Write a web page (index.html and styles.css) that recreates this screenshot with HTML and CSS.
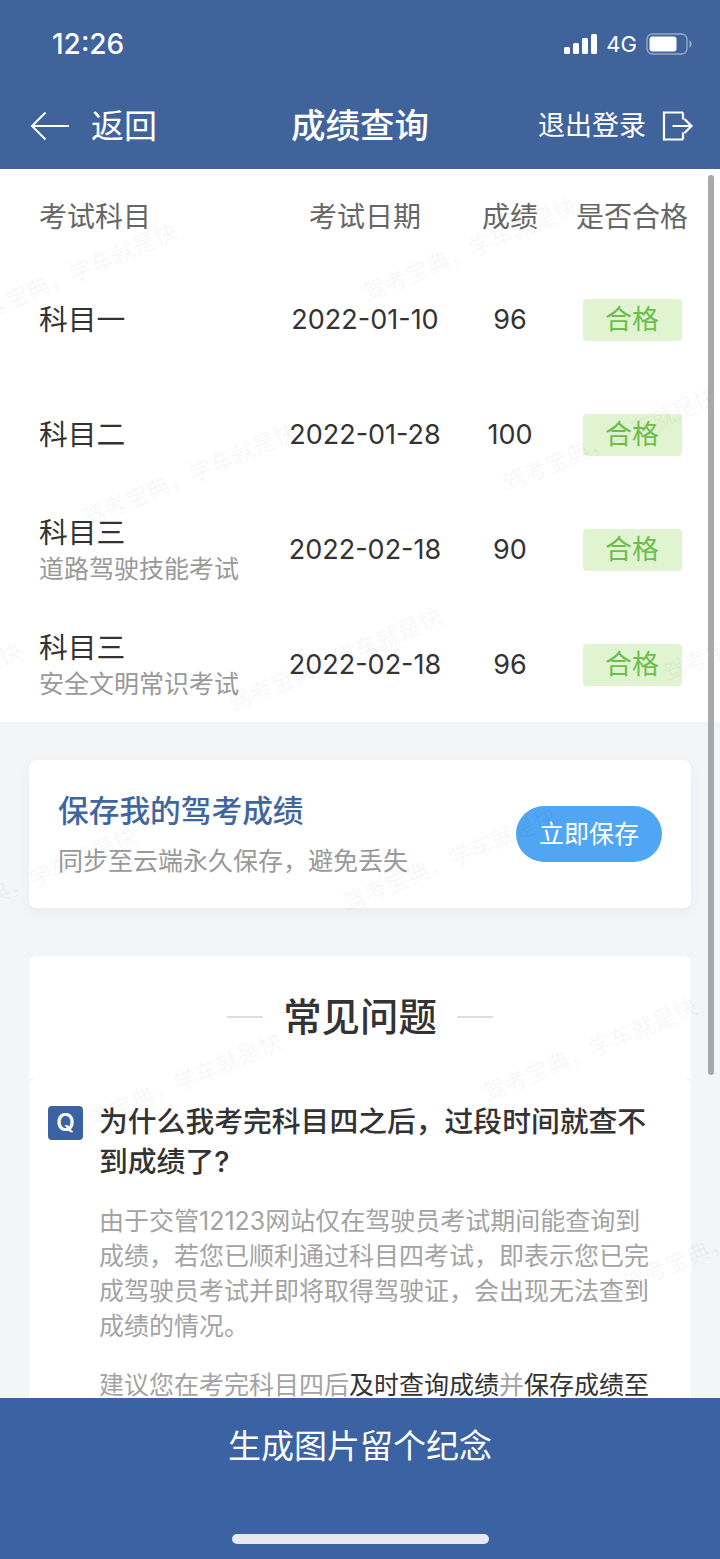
FILE: index.html
```html
<!DOCTYPE html>
<html lang="zh-CN">
<head>
<meta charset="utf-8">
<title>成绩查询</title>
<link rel="stylesheet" href="styles.css">
</head>
<body>
<div class="app">
  <header class="top">
    <div class="status">
      <span class="time">12:26</span>
      <div class="status-right">
        <div class="signal"><i class="b1"></i><i class="b2"></i><i class="b3"></i><i class="b4"></i></div>
        <span class="net">4G</span>
        <svg class="battery" width="46" height="22" viewBox="0 0 46 22"><rect x="1" y="1" width="40" height="20" rx="5.5" fill="none" stroke="#fff" stroke-opacity=".45" stroke-width="1.4"/><rect x="3.5" y="3.5" width="27" height="15" rx="3" fill="#fff"/><path d="M43.5 7.5c1.5.6 2 2 2 3.500s-.5 2.900-2 3.500z" fill="#fff" fill-opacity=".5"/></svg>
      </div>
    </div>
    <nav class="nav">
      <div class="back">
        <svg width="40" height="30" viewBox="0 0 40 30"><path d="M39 15H2M15.500 1.500 2 15l13.500 13.500" fill="none" stroke="#fff" stroke-width="2"/></svg>
        <span>返回</span>
      </div>
      <h1>成绩查询</h1>
      <div class="logout">
        <span>退出登录</span>
        <svg width="31" height="30" viewBox="0 0 31 30"><path d="M21 1.500H2v27h19M21 28.500v-7M21 1.500v7M10.500 15H29M22.500 8 29.500 15l-7 7" fill="none" stroke="#fff" stroke-width="2.200"/></svg>
      </div>
    </nav>
  </header>

  <main class="content">
    <section class="table">
      <div class="row head">
        <span class="name">考试科目</span><span>考试日期</span><span>成绩</span><span class="wide">是否合格</span>
      </div>
      <div class="row">
        <div class="name"><p>科目一</p></div><span>2022-01-10</span><span>96</span><b class="pass">合格</b>
      </div>
      <div class="row">
        <div class="name"><p>科目二</p></div><span>2022-01-28</span><span>100</span><b class="pass">合格</b>
      </div>
      <div class="row">
        <div class="name"><p>科目三</p><small>道路驾驶技能考试</small></div><span>2022-02-18</span><span>90</span><b class="pass">合格</b>
      </div>
      <div class="row">
        <div class="name"><p>科目三</p><small>安全文明常识考试</small></div><span>2022-02-18</span><span>96</span><b class="pass">合格</b>
      </div>
    </section>

    <section class="save card">
      <div>
        <h2>保存我的驾考成绩</h2>
        <p>同步至云端永久保存，避免丢失</p>
      </div>
      <div class="save-btn">立即保存</div>
    </section>

    <section class="faq-head card">
      <i class="dash"></i><h2>常见问题</h2><i class="dash"></i>
    </section>
    <section class="faq-body card">
      <div class="question">
        <span class="q">Q</span>
        <h3>为什么我考完科目四之后，过段时间就查不到成绩了?</h3>
      </div>
      <p class="answer">由于交管12123网站仅在驾驶员考试期间能查询到成绩，若您已顺利通过科目四考试，即表示您已完成驾驶员考试并即将取得驾驶证，会出现无法查到成绩的情况。</p>
      <p class="answer">建议您在考完科目四后<em>及时查询成绩</em>并<em>保存成绩至</em></p>
    </section>

    <div class="marks">
      <span class="wm w1">驾考宝典，学车就是快</span>
      <span class="wm w2">驾考宝典，学车就是快</span>
      <span class="wm w3">驾考宝典，学车就是快</span>
      <span class="wm w4">驾考宝典，学车就是快</span>
      <span class="wm w5">驾考宝典，学车就是快</span>
      <span class="wm w6">驾考宝典，学车就是快</span>
      <span class="wm w7">驾考宝典，学车就是快</span>
      <span class="wm w8">驾考宝典，学车就是快</span>
      <span class="wm w9">驾考宝典，学车就是快</span>
      <span class="wm w10">驾考宝典，学车就是快</span>
      <span class="wm w11">驾考宝典，学车就是快</span>
      <span class="wm w12">驾考宝典，学车就是快</span>
    </div>
    <div class="scrollbar"></div>
  </main>

  <footer class="bottom">
    <div class="gen">生成图片留个纪念</div>
    <div class="home"></div>
  </footer>
</div>
</body>
</html>
```

FILE: styles.css
```css
* { box-sizing: border-box; }
html, body { margin: 0; padding: 0; }
body {
  width: 720px;
  height: 1559px;
  overflow: hidden;
  font-family: "Inter", "Noto Sans CJK SC", "Noto Sans", sans-serif;
  color: #333;
  background: #f3f5f7;
}
p, h1, h2, h3 { margin: 0; font-weight: 400; }
.app { display: flex; flex-direction: column; height: 1559px; }

.top { height: 169px; background: #40639b; color: #fff; flex: none; }
.status {
  height: 88px;
  display: flex;
  align-items: center;
  justify-content: space-between;
  padding: 0 28px 0 52px;
}
.time { font-size: 28px; font-weight: 500; line-height: 34px; }
.status-right { display: flex; align-items: center; }
.signal { display: flex; align-items: flex-end; gap: 3px; height: 20px; margin-right: 9px; }
.signal i { width: 6px; background: #fff; border-radius: 1.5px; display: block; }
.signal .b1 { height: 7px; }
.signal .b2 { height: 11px; }
.signal .b3 { height: 16px; }
.signal .b4 { height: 20px; }
.net { font-size: 22px; line-height: 28px; margin-right: 9px; font-family: "Inter", sans-serif; }
.battery { display: block; }

.nav {
  height: 81px;
  display: flex;
  align-items: center;
  justify-content: space-between;
  padding: 0 27px 6px 30px;
  position: relative;
}
.back { display: flex; align-items: center; gap: 21px; font-size: 33px; line-height: 40px; }
.nav h1 {
  position: absolute;
  left: 0;
  right: 0;
  top: 16px;
  text-align: center;
  font-size: 34.500px;
  line-height: 44px;
  font-weight: 500;
}
.logout { display: flex; align-items: center; gap: 16px; font-size: 27px; line-height: 36px; }

.content { flex: 1; position: relative; overflow: hidden; min-height: 0; }

.table { background: #fff; height: 553px; padding-left: 39px; }
.row {
  display: grid;
  grid-template-columns: 241px 170px 120px 124px;
  align-items: center;
  justify-items: center;
  height: 115px;
  font-size: 27px;
  color: #333;
}
.row.head { height: 93px; font-size: 28px; color: #666; padding-bottom: 1px; }
.row .name { justify-self: start; }
.name p { font-size: 28.800px; line-height: 38px; color: #333; }
.name small { display: block; font-size: 25px; line-height: 34px; color: #999; }
.row.head .wide { white-space: nowrap; }
.pass {
  width: 99px;
  height: 42px;
  font-weight: 400;
  font-size: 27px;
  line-height: 42px;
  text-align: center;
  color: #6cbf4b;
  background: #e0f4d2;
  border-radius: 4px;
}

.card { background: #fff; margin-left: 29px; width: 662px; }
.save {
  margin-top: 38px;
  height: 148px;
  border-radius: 8px;
  box-shadow: 0 4px 12px rgba(60, 80, 110, .05);
  display: flex;
  align-items: center;
  justify-content: space-between;
  padding: 0 29px;
}
.save h2 { font-size: 30.700px; line-height: 44px; color: #3f669f; font-weight: 500; }
.save p { font-size: 25px; line-height: 36px; color: #999; margin-top: 10px; }
.save-btn {
  width: 146px;
  height: 56px;
  border-radius: 28px;
  background: #50a6f2;
  color: #fff;
  font-size: 25px;
  line-height: 56px;
  text-align: center;
}

.faq-head {
  margin-top: 48px;
  height: 122px;
  border-radius: 8px 8px 0 0;
  display: flex;
  align-items: center;
  justify-content: center;
  gap: 20px;
  padding-bottom: 0;
}
.faq-head h2 { font-size: 38.400px; line-height: 48px; font-weight: 500; color: #333; }
.dash { display: block; width: 36px; height: 2px; background: #d9dee6; }
.faq-body { padding: 24px 29px 40px 19px; height: 340px; border-radius: 8px 8px 0 0; }
.question { display: flex; gap: 16px; }
.q {
  flex: none;
  width: 35px;
  height: 34px;
  margin-top: 4px;
  background: #3b62a2;
  border-radius: 4px;
  color: #fff;
  font-size: 24px;
  font-weight: 600;
  line-height: 34px;
  text-align: center;
}
.question h3 { font-size: 28.800px; line-height: 40px; color: #333; font-weight: 500; }
.answer { font-size: 25px; line-height: 35px; color: #a3a3a3; margin: 22px 0 0 51px; }
.answer + .answer { margin-top: 24px; }
.answer em { font-style: normal; color: #333; }

.marks { position: absolute; inset: 0; pointer-events: none; overflow: hidden; }
.wm {
  position: absolute;
  width: 240px;
  margin-left: -120px;
  margin-top: -16px;
  font-size: 23px;
  line-height: 32px;
  text-align: center;
  white-space: nowrap;
  color: rgba(0, 0, 0, .05);
  transform: rotate(-23deg);
}
.w1 { left: 70px; top: 106px; }
.w2 { left: 470px; top: 81px; }
.w3 { left: 190px; top: 306px; }
.w4 { left: 610px; top: 271px; }
.w5 { left: 335px; top: 491px; }
.w6 { left: -85px; top: 526px; }
.w7 { left: 770px; top: 461px; }
.w8 { left: 450px; top: 691px; }
.w9 { left: 30px; top: 711px; }
.w10 { left: 590px; top: 881px; }
.w11 { left: 175px; top: 916px; }
.w12 { left: 730px; top: 1071px; }

.scrollbar {
  position: absolute;
  left: 708px;
  top: 6px;
  width: 6px;
  height: 900px;
  border-radius: 3px;
  background: #a9a9a9;
}

.bottom {
  flex: none;
  height: 161px;
  background: #3b62a2;
  color: #fff;
  position: relative;
  z-index: 1;
}
.gen { text-align: center; font-size: 33px; line-height: 44px; padding-top: 26px; }
.home {
  position: absolute;
  left: 232px;
  top: 136px;
  width: 257px;
  height: 10px;
  border-radius: 5px;
  background: #e6e9ef;
}
```
